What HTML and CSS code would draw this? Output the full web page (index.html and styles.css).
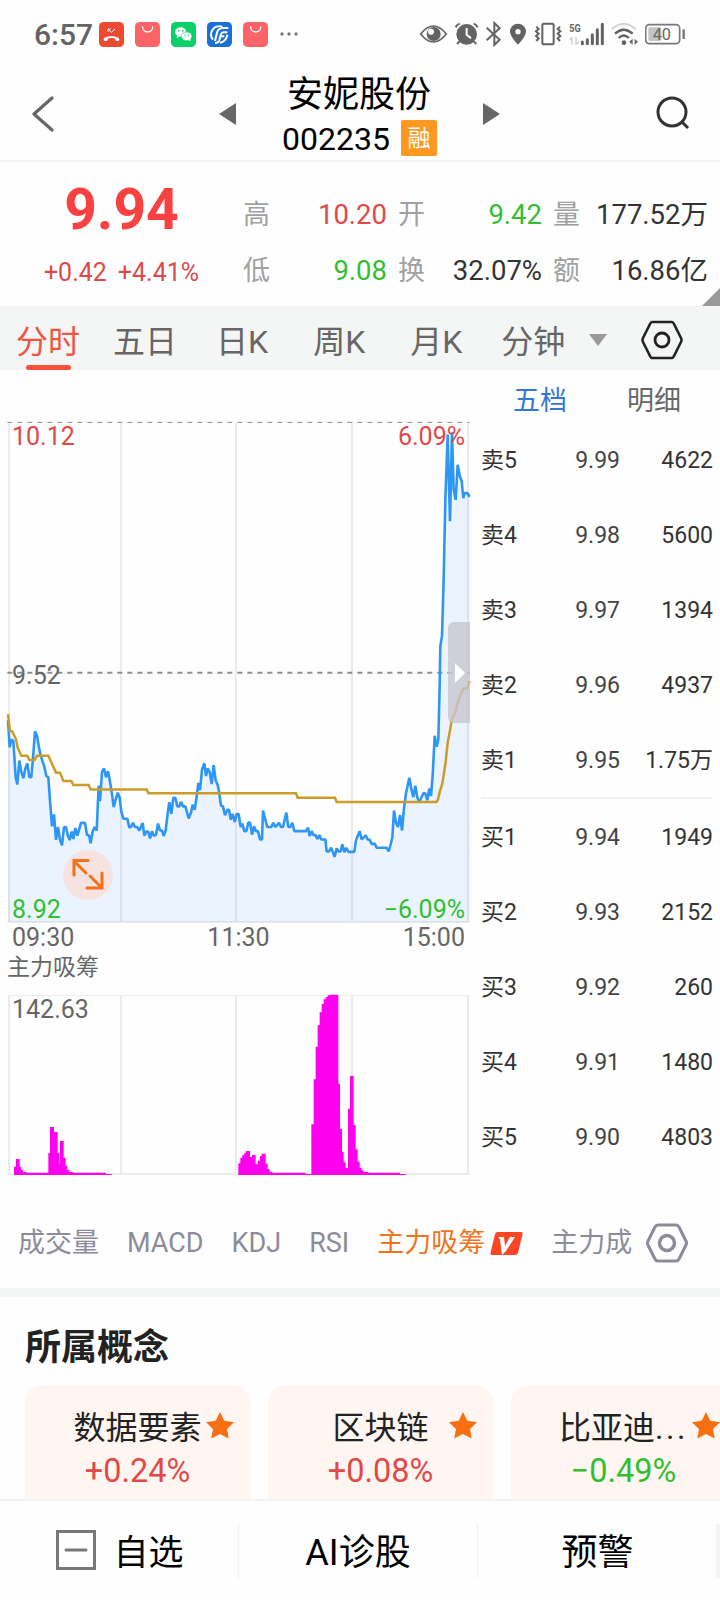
FILE: index.html
```html
<!DOCTYPE html>
<html lang="zh-CN">

<head>
    <meta charset="UTF-8">
    <meta name="viewport" content="width=device-width, initial-scale=1.0">
    <title>安妮股份 002235</title>
    <link rel="stylesheet" href="styles.css">
</head>

<body>
    <div class="status-bar">
        <span class="clock">6:57</span>
        <div class="app-icons">
            <svg class="app-icon" viewBox="0 0 75 75">
                <rect width="75" height="75" rx="14" fill="#ee4a33"/>
                <path d="M14 53C12 39 63 39 61 53C61 58 51 58 49 54V50Q37 46 26 50V54C24 58 14 58 14 53Z" fill="#fff"/>
                <path d="M27 29V21H35M28 22L37 31L48 21" fill="none" stroke="#fff" stroke-width="3"/>
            </svg>
            <svg class="app-icon" viewBox="0 0 75 75">
                <rect width="75" height="75" rx="14" fill="#fd6468"/>
                <path d="M23 15C23 35 53 35 53 15" fill="none" stroke="#fff" stroke-width="4" stroke-linecap="round"/>
            </svg>
            <svg class="app-icon" viewBox="0 0 75 75">
                <rect width="75" height="75" rx="14" fill="#09d168"/>
                <ellipse cx="29" cy="30" rx="17" ry="14" fill="#fff"/>
                <path d="M19 38L17 48L28 43Z" fill="#fff"/>
                <ellipse cx="47" cy="43" rx="16" ry="13" fill="#fff" stroke="#09d168" stroke-width="2"/>
                <path d="M52 54L59 58L57 50Z" fill="#fff"/>
                <g fill="#09d168"><circle cx="23" cy="26" r="2.5"/><circle cx="35" cy="26" r="2.5"/><circle cx="42" cy="39" r="2"/><circle cx="52" cy="39" r="2"/></g>
            </svg>
            <svg class="app-icon" viewBox="0 0 75 75">
                <rect width="75" height="75" rx="14" fill="#1b6fd6"/>
                <g fill="none" stroke="#fff" stroke-width="6">
                    <path d="M46 14C17 8 4 36 18 53"/>
                    <path d="M64 18H46Q33 20 30 32L24 57"/>
                    <path d="M61 31H49Q43 32 41 39L37 55Q34 63 24 63"/>
                    <path d="M41 43H52"/>
                    <path d="M61 38C60 51 50 61 39 62"/>
                </g>
            </svg>
            <svg class="app-icon" viewBox="0 0 75 75">
                <rect width="75" height="75" rx="14" fill="#fd6468"/>
                <path d="M23 15C23 35 53 35 53 15" fill="none" stroke="#fff" stroke-width="4" stroke-linecap="round"/>
            </svg>
            <svg class="more-dots" viewBox="0 0 54 12">
                <circle cx="6" cy="6" r="5"/><circle cx="27" cy="6" r="5"/><circle cx="48" cy="6" r="5"/>
            </svg>
        </div>
        <div class="system-icons">
            <svg width="28" height="26" viewBox="180 63 84 78">
                <path d="M182 102Q220 54 259 102Q220 150 182 102Z" fill="none" stroke="#636363" stroke-width="5"/>
                <circle cx="221" cy="102" r="21" fill="#636363"/>
                <circle cx="213" cy="95" r="9" fill="#fff"/>
            </svg>
            <svg width="24" height="26" viewBox="285 63 72 78">
                <circle cx="320" cy="103" r="31" fill="#636363"/>
                <path d="M287 82Q290 74 299 71M341 71Q350 74 353 82M299 124L291 132M341 124L349 132" fill="none" stroke="#636363" stroke-width="6"/>
                <path d="M320 84V104L333 115" fill="none" stroke="#fff" stroke-width="6"/>
            </svg>
            <svg width="16" height="26" viewBox="378 63 48 78">
                <path d="M380 83L419 119L403 135V69L419 85L380 121" fill="none" stroke="#636363" stroke-width="6"/>
            </svg>
            <svg width="18" height="26" viewBox="447 63 54 78">
                <path fill-rule="evenodd" d="M474 134Q450 108 450 95A24 24 0 0 1 498 95Q498 108 474 134ZM474 87A8 8 0 1 0 474 103A8 8 0 1 0 474 87Z" fill="#636363"/>
            </svg>
            <svg width="28" height="26" viewBox="522 63 84 78">
                <g fill="none" stroke="#636363" stroke-width="6">
                    <rect x="547" y="71" width="34" height="62" rx="5"/>
                    <path d="M529 80L536 87L528 94L536 101L528 108L536 115L529 123M600 80L593 87L601 94L593 101L601 108L593 115L600 123"/>
                </g>
            </svg>
            <svg width="35" height="26" viewBox="627 63 105 78">
                <text x="628" y="97" class="net-label" textLength="34" lengthAdjust="spacingAndGlyphs">5G</text>
                <path d="M636 111V134M636 112L629 119M648 111V134M649 133L657 125" stroke="#ccc" stroke-width="4" fill="none"/>
                <path d="M667 126V131M682 119V131M697 104V131M712 89V131M727 73V131" stroke="#636363" stroke-width="9" stroke-linecap="round"/>
            </svg>
            <svg width="27" height="26" viewBox="753 63 81 78">
                <path d="M755 88Q791 56 828 88" fill="none" stroke="#d0d0d0" stroke-width="6"/>
                <path d="M765 101Q791 77 818 101M776 114Q791 99 807 114" fill="none" stroke="#636363" stroke-width="7"/>
                <circle cx="792" cy="128" r="7" fill="#636363"/>
                <path d="M818 116V134L808 125ZM824 116V134L834 125Z" fill="#636363"/>
            </svg>
            <svg width="40" height="26" viewBox="855 63 120 78">
                <rect x="857" y="74" width="102" height="57" rx="11" fill="none" stroke="#777" stroke-width="5"/>
                <rect x="865" y="82" width="39" height="41" rx="5" fill="#c4c4c4"/>
                <path d="M971 88V117" stroke="#777" stroke-width="7"/>
                <text x="878" y="120" class="battery-label">40</text>
            </svg>
        </div>
    </div>

    <div class="header">
        <svg class="back" width="22" height="36" viewBox="0 0 22 36">
            <path d="M20 2L2 18L20 34" fill="none" stroke="#666" stroke-width="3.200" stroke-linecap="round" stroke-linejoin="round"/>
        </svg>
        <div class="stock-switch">
            <svg width="17" height="22" viewBox="0 0 17 22"><path d="M17 0V22L0 11Z" fill="#666"/></svg>
            <div class="stock-title">
                <div class="stock-name">安妮股份</div>
                <div class="stock-code">002235<span class="badge">融</span></div>
            </div>
            <svg width="17" height="22" viewBox="0 0 17 22"><path d="M0 0V22L17 11Z" fill="#666"/></svg>
        </div>
        <svg class="search" width="34" height="34" viewBox="0 0 34 34">
            <circle cx="16" cy="16" r="14" fill="none" stroke="#333" stroke-width="3"/>
            <path d="M26 26L32 32" stroke="#333" stroke-width="3"/>
        </svg>
    </div>

    <div class="quote">
        <div class="price-box">
            <div class="price">9.94</div>
            <div class="change"><span>+0.42</span><span>+4.41%</span></div>
        </div>
        <div class="stats">
            <span class="label">高</span><span class="value up">10.20</span>
            <span class="label">开</span><span class="value down">9.42</span>
            <span class="label">量</span><span class="value">177.52万</span>
            <span class="label">低</span><span class="value down">9.08</span>
            <span class="label">换</span><span class="value">32.07%</span>
            <span class="label">额</span><span class="value">16.86亿</span>
        </div>
        <div class="corner"></div>
    </div>

    <div class="period-tabs">
        <div class="period active">分时</div>
        <div class="period day">五日</div>
        <div class="period k">日K</div>
        <div class="period k">周K</div>
        <div class="period day">月K</div>
        <div class="period">分钟</div>
        <svg class="drop" width="18" height="12" viewBox="0 0 18 12"><path d="M0 0H18L9 12Z" fill="#999"/></svg>
        <svg class="setting" width="42" height="40" viewBox="0 0 42 40">
            <path d="M11 2H31Q32 2 33 4L40 18Q41 20 40 22L33 36Q32 38 31 38H11Q10 38 9 36L2 22Q1 20 2 18L9 4Q10 2 11 2Z" fill="none" stroke="#222" stroke-width="2.6"/>
            <circle cx="21" cy="20" r="7" fill="none" stroke="#222" stroke-width="2.8"/>
        </svg>
    </div>

    <div class="main">
        <div class="charts">
            <div class="price-chart">
                <svg width="472" height="540" viewBox="0 0 1416 1568" preserveAspectRatio="none">
                    <path class="grid" d="M27 65V1516M363 65V1516M708 65V1516M1056 65V1516M1404 65V1516M22 1516H1409"/>
                    <path class="dash" d="M22 65H1409"/>
                    <path class="dash mid" d="M22 792H1409"/>
                    <path id="area" class="area"/>
                    <polyline id="price" class="price-line" points="24,930 29,1008 34,986 40,990 47,1095 52,1116 58,1047 64,1080 70,1098 76,1070 82,1055 88,1095 94,1095 99,1040 105,962 111,975 117,1010 123,1035 133,1065 139,1092 145,1095 150,1165 156,1238 162,1203 168,1277 174,1240 180,1277 186,1293 192,1240 198,1240 203,1263 209,1278 215,1253 220,1275 226,1243 232,1265 243,1228 255,1228 261,1263 267,1263 272,1287 278,1253 284,1240 290,1250 296,1120 300,1165 306,1080 312,1070 318,1095 324,1078 330,1108 336,1145 341,1182 347,1160 353,1140 359,1155 364,1195 370,1216 382,1216 388,1241 393,1240 399,1228 405,1240 412,1240 418,1250 428,1228 433,1265 440,1252 445,1255 450,1273 456,1252 461,1265 468,1263 474,1230 480,1250 486,1250 491,1266 497,1250 503,1200 508,1168 514,1202 520,1155 526,1155 532,1180 538,1180 543,1167 549,1180 556,1180 566,1215 573,1198 578,1175 584,1190 590,1150 595,1112 600,1133 606,1073 613,1055 618,1092 623,1070 629,1080 635,1115 641,1060 647,1105 653,1118 658,1142 663,1178 669,1180 675,1206 682,1190 687,1190 692,1218 698,1202 704,1225 710,1202 716,1202 722,1240 727,1230 733,1252 739,1252 745,1227 750,1227 756,1262 762,1238 768,1252 774,1252 780,1276 786,1276 789,1192 795,1215 802,1240 814,1240 820,1228 826,1240 837,1228 843,1240 849,1240 859,1198 865,1240 871,1240 877,1228 883,1252 918,1252 924,1242 929,1266 935,1252 941,1264 947,1264 952,1275 958,1263 964,1276 976,1276 980,1311 987,1311 993,1300 998,1311 1004,1326 1010,1302 1016,1311 1022,1311 1027,1290 1033,1313 1039,1300 1045,1312 1063,1312 1068,1278 1079,1252 1085,1276 1097,1264 1103,1276 1109,1277 1115,1289 1125,1289 1130,1300 1160,1300 1166,1311 1172,1290 1177,1270 1182,1192 1188,1228 1194,1240 1200,1205 1206,1250 1212,1185 1218,1142 1228,1097 1234,1130 1240,1153 1246,1120 1252,1155 1258,1167 1264,1155 1270,1142 1276,1142 1282,1162 1288,1128 1293,1150 1298,1090 1304,975 1310,1007 1315,985 1319,830 1321,715 1326,685 1331,520 1336,290 1343,100 1350,352 1356,94 1361,260 1367,290 1373,188 1379,220 1385,235 1390,285 1394,270 1402,270 1409,281"/>
                    <polyline class="avg-line" points="24,912 30,962 36,962 48,985 53,1010 64,1033 82,1033 88,1045 104,1045 111,1033 145,1033 168,1082 180,1082 190,1106 214,1106 220,1118 266,1118 272,1131 440,1131 445,1142 888,1142 893,1155 1005,1155 1010,1167 1309,1167 1314,1160 1320,1135 1326,1118 1331,1090 1337,1050 1343,995 1350,960 1356,925 1367,905 1373,880 1379,862 1390,838 1401,838 1409,816"/>
                </svg>
                <span class="axis top-left up">10.12</span>
                <span class="axis top-right up">6.09%</span>
                <span class="axis middle">9.52</span>
                <span class="axis bottom-left down">8.92</span>
                <span class="axis bottom-right down">−6.09%</span>
                <svg class="expand" width="50" height="50" viewBox="0 0 50 50">
                    <circle cx="25" cy="25" r="25" fill="#f6e2de"/>
                    <path d="M11 25V10.500H25M12 12L23 23M39 23V38H24M38 37L27 26" fill="none" stroke="#f2711c" stroke-width="3" stroke-linecap="round"/>
                </svg>
                <div class="handle"><svg width="10" height="20" viewBox="0 0 10 20"><path d="M0 0L10 10L0 20Z" fill="#fff"/></svg></div>
            </div>
            <div class="times"><span>09:30</span><span>11:30</span><span>15:00</span></div>
            <div class="indicator-name">主力吸筹</div>
            <div class="indicator-chart">
                <svg width="472" height="190" viewBox="0 270 1416 570">
                    <path class="grid" d="M27 287V822M363 287V822M708 287V822M1056 287V822M1404 287V822M22 822H1409"/>
                    <path class="grid thin" d="M22 287H1409"/>
                    <path class="bars" d="M42 825V800H48V777H59V800H64V810H69V816H80V818H145V759H150V681H162V696H173V759H178V790H180V723H191V773H197V797H202V810H208V816H220V818H318V822H335V825Z"/>
                    <path class="bars" d="M715 825V790H721V773H727V765H733V758H738V753H750V771H756V765H767V793H773V782H780V768H785V761H797V791H803V807H809V815H817V818H917V822H934V673H941V538H947V440H953V376H959V337H965V312H971V298H977V291H983V286H989V284H1015V551H1020V687H1026V755H1031V787H1037V804H1044V626H1050V528H1061V675H1067V748H1073V785H1079V803H1085V811H1091V816H1105V818H1200V822H1217V825Z"/>
                </svg>
                <span class="axis max">142.63</span>
            </div>
        </div>

        <div class="order-book">
            <div class="book-tabs"><span class="active">五档</span><span>明细</span></div>
            <div class="row"><span>卖5</span><span>9.99</span><span>4622</span></div>
            <div class="row"><span>卖4</span><span>9.98</span><span>5600</span></div>
            <div class="row"><span>卖3</span><span>9.97</span><span>1394</span></div>
            <div class="row"><span>卖2</span><span>9.96</span><span>4937</span></div>
            <div class="row"><span>卖1</span><span>9.95</span><span>1.75万</span></div>
            <div class="divider"></div>
            <div class="row"><span>买1</span><span>9.94</span><span>1949</span></div>
            <div class="row"><span>买2</span><span>9.93</span><span>2152</span></div>
            <div class="row"><span>买3</span><span>9.92</span><span>260</span></div>
            <div class="row"><span>买4</span><span>9.91</span><span>1480</span></div>
            <div class="row"><span>买5</span><span>9.90</span><span>4803</span></div>
        </div>
    </div>

    <div class="indicator-tabs">
        <span>成交量</span>
        <span>MACD</span>
        <span>KDJ</span>
        <span>RSI</span>
        <span class="active">主力吸筹<svg width="33" height="24" viewBox="0 0 33 24">
                <path d="M8 1H31Q33 1 32.500 3L28 22Q27.500 24 25 24H2Q0 24 0.500 22L5 3Q5.500 1 8 1Z" fill="#fb4527"/>
                <path d="M8 6H14L15 15L20 6H25L16 20L12 24L10 8Z" fill="#fff"/>
            </svg></span>
        <span>主力成</span>
        <svg class="setting" width="42" height="40" viewBox="0 0 42 40">
            <path d="M12 2H30Q32 2 33 4L40 18Q41 20 40 22L33 36Q32 38 30 38H12Q10 38 9 36L2 22Q1 20 2 18L9 4Q10 2 12 2Z" fill="none" stroke="#8b8b99" stroke-width="3"/>
            <circle cx="21" cy="20" r="7.500" fill="none" stroke="#8b8b99" stroke-width="3.500"/>
        </svg>
    </div>

    <div class="concepts">
        <h2>所属概念</h2>
        <div class="cards">
            <div class="card">
                <div class="card-name">数据要素</div>
                <div class="card-change up">+0.24%</div>
                <svg class="star" viewBox="0 0 28 27"><path d="M14 0L18.300 8.800L28 10.200L21 17L22.700 26.600L14 22.100L5.300 26.600L7 17L0 10.200L9.700 8.800Z"/></svg>
            </div>
            <div class="card">
                <div class="card-name">区块链</div>
                <div class="card-change up">+0.08%</div>
                <svg class="star" viewBox="0 0 28 27"><path d="M14 0L18.300 8.800L28 10.200L21 17L22.700 26.600L14 22.100L5.300 26.600L7 17L0 10.200L9.700 8.800Z"/></svg>
            </div>
            <div class="card">
                <div class="card-name">比亚迪<span class="dots">...</span></div>
                <div class="card-change down">−0.49%</div>
                <svg class="star" viewBox="0 0 28 27"><path d="M14 0L18.300 8.800L28 10.200L21 17L22.700 26.600L14 22.100L5.300 26.600L7 17L0 10.200L9.700 8.800Z"/></svg>
            </div>
        </div>
    </div>

    <div class="bottom-bar">
        <div class="action">
            <svg width="40" height="40" viewBox="0 0 40 40">
                <rect x="1.500" y="1.500" width="37" height="37" fill="none" stroke="#777" stroke-width="3"/>
                <path d="M10 20H30" stroke="#777" stroke-width="3" stroke-linecap="round"/>
            </svg>自选
        </div>
        <div class="action">AI诊股</div>
        <div class="action">预警</div>
        <div class="bar-end"></div>
    </div>

    <script>
        // shaded area under the price line
        const pts = document.getElementById('price').getAttribute('points');
        document.getElementById('area').setAttribute('d', 'M24,1516 L' + pts + ' L1409,1516 Z');
    </script>
</body>

</html>
```

FILE: styles.css
```css
* {
    box-sizing: border-box;
}

body {
    margin: 0;
    width: 720px;
    height: 1600px;
    overflow: hidden;
    background-color: #fefefe;
    font-family: Roboto, "Noto Sans CJK SC", sans-serif;
    color: #333;
}

svg {
    display: block;
    flex: none;
}

.up {
    color: #e24848;
}

.down {
    color: #31bf31;
}

/* status bar */
.status-bar {
    display: flex;
    align-items: center;
    height: 68px;
    padding: 0 35px 0 34px;
}

.clock {
    width: 65px;
    font-size: 30px;
    font-weight: 500;
    color: #636363;
}

.app-icons {
    display: flex;
    align-items: center;
    gap: 11px;
}

.app-icon {
    width: 25px;
    height: 25px;
}

.more-dots {
    width: 18px;
    height: 4px;
    margin-left: 1px;
    fill: #777;
}

.system-icons {
    display: flex;
    gap: 7px;
    margin-left: auto;
}

.net-label {
    font-size: 33px;
    font-weight: 700;
    fill: #636363;
}

.battery-label {
    font-size: 49px;
    fill: #666;
}

/* header */
.header {
    display: flex;
    align-items: center;
    justify-content: space-between;
    height: 94px;
    padding: 0 30px 0 32px;
    border-bottom: 2px solid #f4f4f4;
}

.stock-switch {
    display: flex;
    align-items: center;
    justify-content: space-between;
    width: 281px;
    margin-left: 8px;
}

.stock-title {
    color: #000;
}

.stock-name {
    height: 47px;
    font-size: 36px;
    line-height: 55px;
    text-align: center;
}

.stock-code {
    display: flex;
    align-items: center;
    gap: 11px;
    height: 45px;
    padding: 4px 0 0 1px;
    font-size: 32px;
    line-height: 41px;
}

.badge {
    width: 36px;
    height: 36px;
    margin-top: -4px;
    border-radius: 2px;
    background-color: #ff9820;
    color: #fff;
    font-size: 23px;
    line-height: 37px;
    text-align: center;
}

.search {
    margin-bottom: 3px;
}

/* quote */
.quote {
    display: flex;
    height: 144px;
}

.corner {
    align-self: flex-end;
    width: 18px;
    height: 18px;
    margin-left: auto;
    background-color: #999;
    clip-path: polygon(100% 0, 100% 100%, 0 100%);
}

.price-box {
    width: 243px;
    padding-top: 16px;
    text-align: center;
}

.price {
    font-size: 57px;
    font-weight: 700;
    line-height: 63px;
    color: #fa4141;
}

.change {
    display: flex;
    justify-content: center;
    gap: 11px;
    margin-top: 17px;
    font-size: 25px;
    line-height: 30px;
    color: #db4b4b;
}

.stats {
    display: grid;
    grid-template-columns: 27px 117px 38px 117px 38px 128px;
    grid-auto-rows: 56px;
    width: 459px;
    padding-top: 25px;
    font-size: 27px;
    line-height: 56px;
}

.label {
    color: #a0a0a0;
    text-align: right;
}

.stats .value {
    font-size: 27.5px;
    text-align: right;
    white-space: nowrap;
}

/* period tabs */
.period-tabs {
    display: flex;
    align-items: center;
    height: 64px;
    padding-left: 16px;
    background-color: #f4f5f5;
    color: #666;
    font-size: 32px;
    line-height: 72px;
}

.period {
    position: relative;
    height: 64px;
    margin-right: 35px;
    white-space: nowrap;
}

.period.day {
    margin-right: 39px;
}

.period.k {
    margin-right: 45px;
}

.period.active {
    margin-right: 33px;
    color: #ee5640;
}

.period.active::after {
    content: "";
    position: absolute;
    left: 10px;
    bottom: 0;
    width: 45px;
    height: 5px;
    border-radius: 3px;
    background-color: #fd5038;
}

.drop {
    margin-left: -11px;
    margin-top: 4px;
}

.period-tabs .setting {
    margin-left: 34px;
    margin-top: 4px;
}

/* charts */
.main {
    display: flex;
    height: 828px;
}

.charts {
    width: 472px;
    padding-top: 30px;
}

.price-chart {
    position: relative;
    height: 523px;
}

.grid {
    fill: none;
    stroke: #ebebeb;
    stroke-width: 2;
    vector-effect: non-scaling-stroke;
}

.thin {
    stroke-width: 1;
}

.dash {
    fill: none;
    stroke: #8e8e8e;
    stroke-width: 1;
    stroke-dasharray: 5 5;
    vector-effect: non-scaling-stroke;
}

.dash.mid {
    stroke-width: 1.8;
}

.area {
    fill: rgba(41, 130, 250, 0.09);
}

.price-line {
    fill: none;
    stroke: #2e96f5;
    stroke-width: 2.6;
    stroke-linejoin: bevel;
    vector-effect: non-scaling-stroke;
}

.avg-line {
    fill: none;
    stroke: #cc9c29;
    stroke-width: 2.5;
    vector-effect: non-scaling-stroke;
}

.axis {
    position: absolute;
    font-size: 25px;
    line-height: 30px;
}

.axis.middle,
.axis.max {
    color: #666;
}

.top-left {
    left: 12px;
    top: 22px;
}

.top-right {
    right: 7px;
    top: 22px;
}

.middle {
    left: 12px;
    top: 261px;
}

.bottom-left {
    left: 12px;
    top: 495px;
}

.bottom-right {
    right: 7px;
    top: 495px;
}

.expand {
    position: absolute;
    left: 63px;
    top: 450px;
}

.handle {
    position: absolute;
    left: 448px;
    top: 222px;
    display: flex;
    align-items: center;
    width: 22px;
    height: 101px;
    padding-left: 7px;
    border-radius: 6px 0 0 6px;
    background-color: rgba(197, 197, 208, 0.8);
}

.times {
    display: flex;
    justify-content: space-between;
    height: 28px;
    padding: 0 7px 0 12px;
    font-size: 25px;
    line-height: 30px;
    color: #666;
}

.indicator-name {
    height: 30px;
    padding-left: 7px;
    font-size: 23px;
    line-height: 33px;
    color: #666;
}

.indicator-chart {
    position: relative;
    margin-top: 9px;
}

.max {
    left: 12px;
    top: 5px;
}

.bars {
    fill: #ff00ee;
}

/* order book */
.order-book {
    width: 248px;
    padding: 0 7px 0 9px;
    font-size: 23px;
}

.book-tabs {
    display: flex;
    gap: 60px;
    height: 52px;
    padding-left: 32px;
    font-size: 27px;
    line-height: 63px;
    color: #666;
}

.book-tabs .active {
    color: #3577d4;
}

.row {
    display: flex;
    height: 75px;
    line-height: 77px;
}

.row span:nth-child(1) {
    width: 60px;
}

.row span:nth-child(2) {
    width: 79px;
    text-align: right;
    color: #444;
}

.row span:nth-child(3) {
    flex: 1;
    text-align: right;
}

.divider {
    height: 2px;
    background-color: #f2f2f2;
}

/* indicator tabs */
.indicator-tabs {
    display: flex;
    align-items: center;
    height: 99px;
    padding-left: 18px;
    border-bottom: 9px solid #f4f5f5;
    font-size: 27px;
    line-height: 36px;
    color: #8b8b99;
    white-space: nowrap;
}

.indicator-tabs span {
    margin-right: 28px;
}

.indicator-tabs .active {
    display: flex;
    align-items: center;
    gap: 5px;
    color: #ef7422;
}

.indicator-tabs .setting {
    margin-left: -14px;
}

/* concepts */
.concepts {
    height: 202px;
    padding-left: 25px;
    overflow: hidden;
}

.concepts h2 {
    height: 88px;
    margin: 0;
    font-size: 36px;
    line-height: 102px;
    color: #222;
}

.cards {
    display: flex;
    gap: 18px;
}

.card {
    position: relative;
    flex: none;
    width: 225px;
    height: 140px;
    padding-top: 21px;
    border-radius: 17px;
    background-color: #fff6f1;
    text-align: center;
}

.card-name {
    font-size: 32px;
    line-height: 44px;
    color: #222;
}

.dots {
    letter-spacing: 2.5px;
}

.card-change {
    font-size: 32.5px;
    line-height: 43px;
}

.star {
    position: absolute;
    right: 16px;
    top: 27px;
    width: 28px;
    height: 27px;
    fill: #f76e13;
}

/* bottom bar */
.bottom-bar {
    display: flex;
    align-items: center;
    height: 101px;
    border-top: 2px solid #f2f3f3;
    background-color: #fefefe;
    font-size: 36px;
    line-height: 49px;
    color: #000;
}

.action {
    display: flex;
    align-items: center;
    justify-content: center;
    gap: 17px;
    width: 239px;
    height: 54px;
    padding-top: 5px;
    border-right: 1px solid #efefef;
}

.action:nth-child(1) {
    padding-left: 2px;
    font-size: 35px;
}

.action svg {
    margin-top: -7px;
}

.action:nth-child(3) {
    border-right: none;
}

.bar-end {
    width: 4px;
    height: 54px;
    margin-left: -1px;
    background-color: #f2f3f3;
}
```
